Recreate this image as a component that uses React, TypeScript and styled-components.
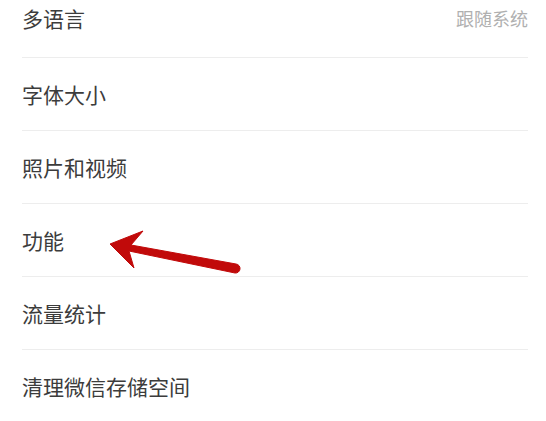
import React from "react";
import styled, { createGlobalStyle } from "styled-components";

const Global = createGlobalStyle`
  html, body {
    margin: 0;
    padding: 0;
    background: #ffffff;
  }
  body {
    font-family: "Noto Sans CJK SC", "Noto Sans", sans-serif;
  }
`;

const Page = styled.div`
  position: relative;
  width: 546px;
  height: 421px;
  overflow: hidden;
  background: #ffffff;
`;

const List = styled.div`
  display: flex;
  flex-direction: column;
  padding: 0 18px 0 22px;
`;

const Row = styled.div<{ $first?: boolean }>`
  display: flex;
  align-items: center;
  justify-content: space-between;
  padding: ${(p) => (p.$first ? "6px 0 27px" : "24px 0 24px")};
  border-bottom: 1px solid #ededed;
  &:last-child {
    border-bottom: none;
  }
`;

const Label = styled.span`
  font-size: 21px;
  line-height: 24px;
  color: #3c3c3c;
`;

const Value = styled.span`
  font-size: 18px;
  line-height: 24px;
  color: #b0b0b0;
`;

const ArrowLayer = styled.svg`
  position: absolute;
  left: 0;
  top: 0;
  pointer-events: none;
`;

const items: { label: string; value?: string }[] = [
  { label: "多语言", value: "跟随系统" },
  { label: "字体大小" },
  { label: "照片和视频" },
  { label: "功能" },
  { label: "流量统计" },
  { label: "清理微信存储空间" },
];

export default function App() {
  return (
    <Page>
      <Global />
      <List>
        {items.map((it, i) => (
          <Row key={it.label} $first={i === 0}>
            <Label>{it.label}</Label>
            {it.value && <Value>{it.value}</Value>}
          </Row>
        ))}
      </List>
      <ArrowLayer width="546" height="421" viewBox="0 0 546 421">
        <path
          d="M110 244 L143 231 L131 245 L236 264 A4.5 4.5 0 0 1 235 273 L129 251 L134 268 Z"
          fill="#c10a0a"
          stroke="#c10a0a"
          strokeWidth="1"
          strokeLinejoin="round"
        />
      </ArrowLayer>
    </Page>
  );
}
